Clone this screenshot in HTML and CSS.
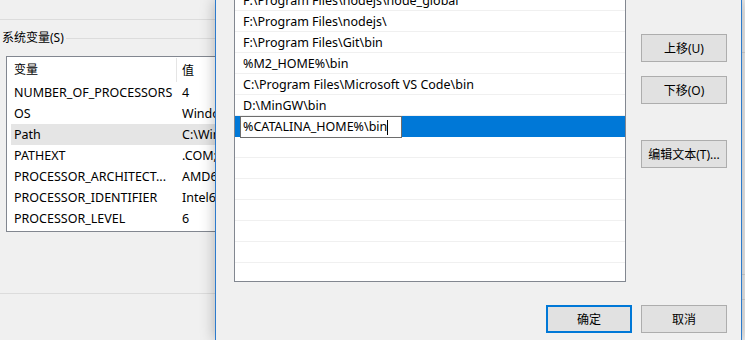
FILE: index.html
```html
<!DOCTYPE html>
<html lang="zh-CN">
<head>
    <meta charset="UTF-8">
    <title>编辑环境变量</title>
    <link rel="stylesheet" href="styles.css">
</head>
<body>
    <div class="screen">
        <div class="back-window">
            <div class="hr top-rule"></div>
            <div class="group-title">
                <span>系统变量(S)</span>
                <div class="group-line"></div>
            </div>
            <div class="listview">
                <div class="lv-header">
                    <div class="col-name">变量</div>
                    <div class="col-value">值</div>
                </div>
                <div class="lv-row"><div class="col-name">NUMBER_OF_PROCESSORS</div><div class="col-value">4</div></div>
                <div class="lv-row"><div class="col-name">OS</div><div class="col-value">Windows_NT</div></div>
                <div class="lv-row selected"><div class="col-name">Path</div><div class="col-value">C:\Windows\system32</div></div>
                <div class="lv-row"><div class="col-name">PATHEXT</div><div class="col-value">.COM;.EXE;.BAT</div></div>
                <div class="lv-row"><div class="col-name">PROCESSOR_ARCHITECT...</div><div class="col-value">AMD64</div></div>
                <div class="lv-row"><div class="col-name">PROCESSOR_IDENTIFIER</div><div class="col-value">Intel64 Family 6</div></div>
                <div class="lv-row"><div class="col-name">PROCESSOR_LEVEL</div><div class="col-value">6</div></div>
            </div>
            <div class="hr bottom-rule"></div>
        </div>

        <div class="dialog">
            <div class="dialog-main">
                <div class="path-list">
                    <div class="path-row">F:\Program Files\nodejs\node_global</div>
                    <div class="path-row">F:\Program Files\nodejs\</div>
                    <div class="path-row">F:\Program Files\Git\bin</div>
                    <div class="path-row">%M2_HOME%\bin</div>
                    <div class="path-row">C:\Program Files\Microsoft VS Code\bin</div>
                    <div class="path-row">D:\MinGW\bin</div>
                    <div class="path-row editing">
                        <div class="edit-box"><span>%CATALINA_HOME%\bin</span><span class="caret"></span></div>
                    </div>
                    <div class="path-row"></div>
                    <div class="path-row"></div>
                    <div class="path-row"></div>
                    <div class="path-row"></div>
                    <div class="path-row"></div>
                    <div class="path-row"></div>
                    <div class="path-row last"></div>
                </div>
                <div class="side-buttons">
                    <button class="btn move-up">上移(U)</button>
                    <button class="btn move-down">下移(O)</button>
                    <button class="btn edit-text">编辑文本(T)...</button>
                </div>
            </div>
            <div class="dialog-footer">
                <button class="btn default">确定</button>
                <button class="btn">取消</button>
            </div>
        </div>

        <div class="next-window">
            <div class="nw-line l1"></div>
            <div class="nw-line l2"></div>
            <div class="nw-line l3"></div>
        </div>
    </div>
</body>
</html>
```

FILE: styles.css
```css
html, body { margin: 0; padding: 0; }
body { width: 745px; height: 340px; overflow: hidden; background: #f0f0f0; font-family: "Noto Sans", "Noto Sans CJK SC", sans-serif; font-size: 12.5px; color: #000; }

.screen { display: flex; height: 340px; }

/* window behind the dialog */
.back-window { width: 215px; flex: none; overflow: hidden; background: #f0f0f0; }
.hr { height: 1px; background: #dcdcdc; width: 300px; }
.top-rule { margin-top: 19px; }
.bottom-rule { margin-top: 61px; }
.group-title { display: flex; align-items: center; height: 16px; margin-top: 10px; padding-left: 2px; width: 300px; font-size: 12px; }
.group-title span { line-height: 16px; }
.group-line { flex: 1; height: 1px; background: #dcdcdc; margin-left: 2px; }

.listview { margin: 10px 0 0 6px; width: 320px; height: 174px; border: 1px solid #828790; background: #fff; }
.lv-header { display: flex; height: 25px; align-items: center; }
.lv-header .col-name { width: 162px; padding-left: 7px; height: 24px; line-height: 24px; border-right: 1px solid #e5e5e5; font-size: 12px; }
.lv-header .col-value { padding-left: 5px; font-size: 12px; }
.lv-row { display: flex; height: 21px; line-height: 21px; margin-left: 4px; white-space: nowrap; }
.lv-row .col-name { width: 165px; padding-left: 3px; overflow: hidden; }
.lv-row .col-value { padding-left: 3px; }
.lv-row.selected { background: #e5e5e5; }

/* edit environment variable dialog */
.dialog { position: relative; z-index: 1; flex: none; width: 527px; box-sizing: border-box; border-left: 1px solid #2d7bcc; border-right: 1px solid #2d7bcc; background: #f0f0f0; box-shadow: 0 0 14px rgba(0, 0, 0, 0.28); padding: 0 14px 0 18px; }
.dialog-main { display: flex; }
.path-list { width: 392px; height: 293px; margin-top: -11px; box-sizing: border-box; border: 1px solid #828790; background: #fff; }
.path-row { height: 20px; line-height: 22px; border-bottom: 1px solid #f0f0f0; padding-left: 8px; white-space: nowrap; }
.path-row.last { border-bottom: none; }
.path-row.editing { background: #0078d7; border-bottom-color: #0078d7; padding-left: 5px; }
.edit-box { display: flex; align-items: center; width: 158px; height: 20px; border: 1px solid #6d6d6d; background: #fff; padding-left: 2px; }
.caret { width: 1px; height: 15px; background: #000; }

.side-buttons { display: flex; flex-direction: column; margin-left: 15px; }
.btn { width: 86px; height: 28px; padding: 0; border: 1px solid #adadad; background: #e1e1e1; font-family: inherit; font-size: 12px; color: #000; }
.move-up { margin-top: 34px; }
.move-down { margin-top: 14px; }
.edit-text { margin-top: 36px; }

.dialog-footer { display: flex; justify-content: flex-end; gap: 9px; margin-top: 23px; }
.btn.default { border: 2px solid #0078d7; }

.next-window { flex: 1; background: #ececec; }
.nw-line { height: 1px; background: #d5d5d5; }
.l1 { margin-top: 52px; }
.l2 { margin-top: 221px; }
.l3 { margin-top: 24px; }
```
